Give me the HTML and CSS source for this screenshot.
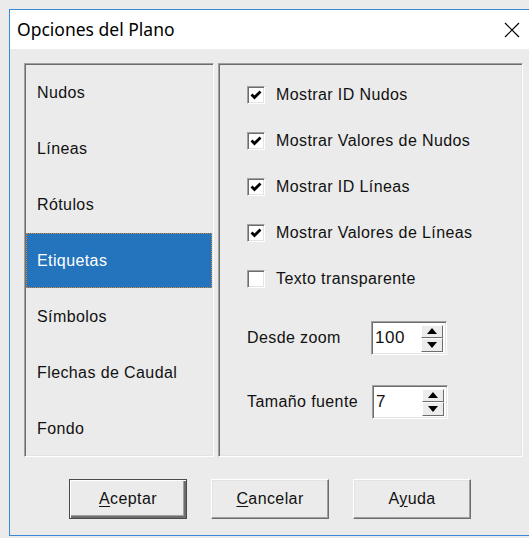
FILE: index.html
```html
<!DOCTYPE html>
<html lang="es">
<head>
<meta charset="utf-8">
<title>Opciones del Plano</title>
<link rel="stylesheet" href="styles.css">
</head>
<body>
<div class="window">
  <div class="titlebar">
    <span class="title">Opciones del Plano</span>
    <svg class="close" width="16" height="16" viewBox="0 0 16 16">
      <path d="M1 1 L15 15 M15 1 L1 15" stroke="#000" stroke-width="1.2" fill="none"/>
    </svg>
  </div>
  <div class="client">
    <div class="panels">
      <ul class="panel pagelist">
        <li>Nudos</li>
        <li>Líneas</li>
        <li>Rótulos</li>
        <li class="selected">Etiquetas</li>
        <li>Símbolos</li>
        <li>Flechas de Caudal</li>
        <li>Fondo</li>
      </ul>
      <div class="panel page">
        <label class="check"><span class="box"><svg width="12" height="12" viewBox="0 0 12 12"><path d="M1.5 5.5 L4.5 8.5 L10.5 2.5" stroke="#000" stroke-width="2.8" fill="none"/></svg></span>Mostrar ID Nudos</label>
        <label class="check"><span class="box"><svg width="12" height="12" viewBox="0 0 12 12"><path d="M1.5 5.5 L4.5 8.5 L10.5 2.5" stroke="#000" stroke-width="2.8" fill="none"/></svg></span>Mostrar Valores de Nudos</label>
        <label class="check"><span class="box"><svg width="12" height="12" viewBox="0 0 12 12"><path d="M1.5 5.5 L4.5 8.5 L10.5 2.5" stroke="#000" stroke-width="2.8" fill="none"/></svg></span>Mostrar ID Líneas</label>
        <label class="check"><span class="box"><svg width="12" height="12" viewBox="0 0 12 12"><path d="M1.5 5.5 L4.5 8.5 L10.5 2.5" stroke="#000" stroke-width="2.8" fill="none"/></svg></span>Mostrar Valores de Líneas</label>
        <label class="check"><span class="box"></span>Texto transparente</label>
        <div class="field first">
          <span class="flabel">Desde zoom</span>
          <div class="spin">
            <span class="value">100</span>
            <div class="arrows">
              <span class="arrow"><svg width="10" height="6" viewBox="0 0 10 6"><path d="M0 6 L5 0 L10 6 Z" fill="#000"/></svg></span>
              <span class="arrow"><svg width="10" height="6" viewBox="0 0 10 6"><path d="M0 0 L5 6 L10 0 Z" fill="#000"/></svg></span>
            </div>
          </div>
        </div>
        <div class="field second">
          <span class="flabel">Tamaño fuente</span>
          <div class="spin">
            <span class="value">7</span>
            <div class="arrows">
              <span class="arrow"><svg width="10" height="6" viewBox="0 0 10 6"><path d="M0 6 L5 0 L10 6 Z" fill="#000"/></svg></span>
              <span class="arrow"><svg width="10" height="6" viewBox="0 0 10 6"><path d="M0 0 L5 6 L10 0 Z" fill="#000"/></svg></span>
            </div>
          </div>
        </div>
      </div>
    </div>
    <div class="buttons">
      <button class="btn default"><u>A</u>ceptar</button>
      <button class="btn"><u>C</u>ancelar</button>
      <button class="btn">A<u>y</u>uda</button>
    </div>
  </div>
</div>
</body>
</html>
```

FILE: styles.css
```css
html, body {
  margin: 0;
  padding: 0;
  background: #ebebeb;
  overflow: hidden;
}

body {
  padding: 9px 0 0 9px;
  font-family: "Liberation Sans", Arial, sans-serif;
  font-size: 16px;
  letter-spacing: 0.4px;
  color: #111;
}

.window {
  width: 540px;
  height: 525px;
  border: 1px solid #3b88d4;
  background: #ebebeb;
  display: flex;
  flex-direction: column;
}

.titlebar {
  height: 39px;
  background: #fff;
  display: flex;
  align-items: center;
  padding-left: 7px;
}

.title {
  font-family: "Noto Sans", "Open Sans", sans-serif;
  font-size: 17.5px;
  letter-spacing: 0;
  color: #000;
  flex: 1;
  margin-top: -2px;
}

.close {
  margin-right: 30px;
}

.client {
  flex: 1;
  padding: 14px 0 0 14px;
  display: flex;
  flex-direction: column;
}

.panels {
  display: flex;
  gap: 4px;
  height: 394px;
}

.panel {
  box-sizing: border-box;
  margin: 0;
  border-style: solid;
  border-width: 1px;
  border-color: #a0a0a0 #fff #fff #a0a0a0;
  box-shadow: inset 1px 1px 0 #6d6d6d, inset -1px -1px 0 #e3e3e3;
}

.pagelist {
  width: 190px;
  list-style: none;
  padding: 1px 1px 0 1px;
}

.pagelist li {
  height: 56px;
  display: flex;
  align-items: center;
  padding-left: 11px;
}

.pagelist li.selected {
  background: #2473bd;
  color: #fff;
  height: 55px;
  margin-bottom: 1px;
  outline: 1px dotted #d9873b;
  outline-offset: -1px;
}

.page {
  width: 305px;
  padding: 8px 0 0 28px;
  display: flex;
  flex-direction: column;
}

.check {
  height: 46px;
  display: flex;
  align-items: center;
  gap: 11px;
}

.box {
  box-sizing: border-box;
  width: 18px;
  height: 18px;
  background: #fff;
  border-style: solid;
  border-width: 1px;
  border-color: #a0a0a0 #fff #fff #a0a0a0;
  box-shadow: inset 1px 1px 0 #6d6d6d, inset -1px -1px 0 #e3e3e3;
  display: flex;
  align-items: center;
  justify-content: center;
}

.field {
  display: flex;
  align-items: center;
  height: 34px;
}

.field.first {
  margin-top: 19px;
}

.field.second {
  margin-top: 30px;
}

.flabel {
  width: 124px;
}

.second .flabel {
  width: 125px;
}

.spin {
  box-sizing: border-box;
  width: 76px;
  height: 34px;
  background: #fff;
  border-style: solid;
  border-width: 1px;
  border-color: #a0a0a0 #fff #fff #a0a0a0;
  box-shadow: inset 1px 1px 0 #6d6d6d, inset -1px -1px 0 #e3e3e3;
  display: flex;
  align-items: center;
  padding: 2px 3px 2px 3px;
}

.value {
  flex: 1;
  font-size: 17px;
  letter-spacing: 0.6px;
}

.arrows {
  width: 22px;
  height: 27px;
  display: flex;
  flex-direction: column;
}

.arrow {
  flex: 1;
  box-sizing: border-box;
  background: #ececec;
  border-style: solid;
  border-width: 1px;
  border-color: #fff #6d6d6d #6d6d6d #fff;
  display: flex;
  align-items: center;
  justify-content: center;
}

.buttons {
  display: flex;
  gap: 24px;
  padding: 22px 0 0 45px;
}

.btn {
  box-sizing: border-box;
  width: 118px;
  height: 40px;
  font-family: "Liberation Sans", Arial, sans-serif;
  font-size: 16px;
  letter-spacing: 0.4px;
  color: #111;
  background: #ebebeb;
  border-style: solid;
  border-width: 1px;
  border-color: #fff #6d6d6d #6d6d6d #fff;
  box-shadow: inset -1px -1px 0 #a0a0a0, inset 1px 1px 0 #e3e3e3;
  padding: 0;
}

.btn.default {
  border: 1px solid #4a4a4a;
  box-shadow: inset 1px 1px 0 #fff, inset -2px -2px 0 #6d6d6d, inset -3px -3px 0 #a0a0a0;
}

.btn u {
  text-decoration-thickness: 1px;
  text-underline-offset: 2px;
}
```
